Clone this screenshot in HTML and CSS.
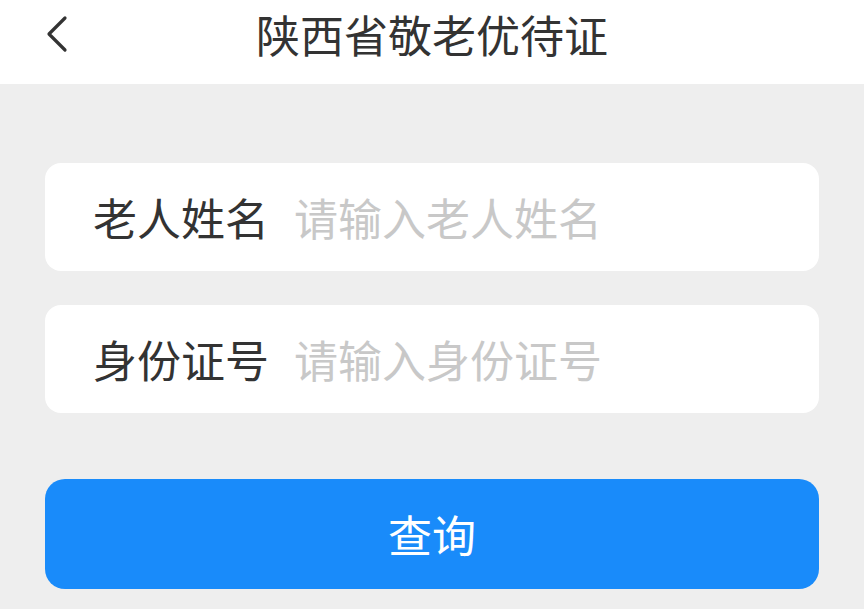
FILE: index.html
```html
<!DOCTYPE html>
<html lang="zh-CN">
<head>
<meta charset="utf-8">
<title>陕西省敬老优待证</title>
<link rel="stylesheet" href="styles.css">
</head>
<body>
<header class="topbar">
  <a class="back" href="#" aria-label="返回">
    <svg width="24" height="40" viewBox="0 0 24 40"><polyline points="20,4 4,20 20,36" fill="none" stroke="#333" stroke-width="3.2" stroke-linecap="round" stroke-linejoin="round"/></svg>
  </a>
  <h1 class="title">陕西省敬老优待证</h1>
  <span class="spacer"></span>
</header>
<main class="content">
  <label class="field">
    <span class="label">老人姓名</span>
    <input class="input" type="text" placeholder="请输入老人姓名">
  </label>
  <label class="field">
    <span class="label">身份证号</span>
    <input class="input" type="text" placeholder="请输入身份证号">
  </label>
  <button class="submit" type="button">查询</button>
</main>
</body>
</html>
```
FILE: styles.css
```css
* { box-sizing: border-box; }
html, body { margin: 0; padding: 0; }
body {
  background: #eeeeee;
  font-family: "Noto Sans CJK SC", "Noto Sans", sans-serif;
  color: #333333;
  width: 864px;
  height: 609px;
  overflow: hidden;
}
.topbar {
  height: 84px;
  background: #ffffff;
  display: grid;
  grid-template-columns: 1fr auto 1fr;
  align-items: center;
  padding: 0 0 16px 0;
}
.back {
  display: flex;
  align-items: center;
  padding-left: 45px;
  height: 40px;
}
.back svg { display: block; }
.title {
  margin: 0;
  font-size: 44px;
  font-weight: 400;
  line-height: 1;
  color: #333333;
}
.content {
  padding: 79px 45px 0 45px;
  display: flex;
  flex-direction: column;
}
.field {
  height: 108px;
  background: #ffffff;
  border-radius: 16px;
  display: flex;
  align-items: center;
  padding-left: 48px;
  margin-bottom: 34px;
}
.field + .field { margin-bottom: 66px; }
.label {
  font-size: 44px;
  line-height: 1;
  color: #333333;
  white-space: nowrap;
}
.input {
  flex: 1;
  margin-left: 25px;
  border: 0;
  outline: none;
  background: transparent;
  font-family: inherit;
  font-size: 44px;
  line-height: 1;
  color: #333333;
  padding: 0;
  min-width: 0;
}
.input::placeholder { color: #c8c8c8; }
.submit {
  height: 110px;
  border: 0;
  border-radius: 20px;
  background: #198bfa;
  color: #ffffff;
  font-family: inherit;
  font-size: 44px;
  line-height: 1;
  padding: 0;
}
```
